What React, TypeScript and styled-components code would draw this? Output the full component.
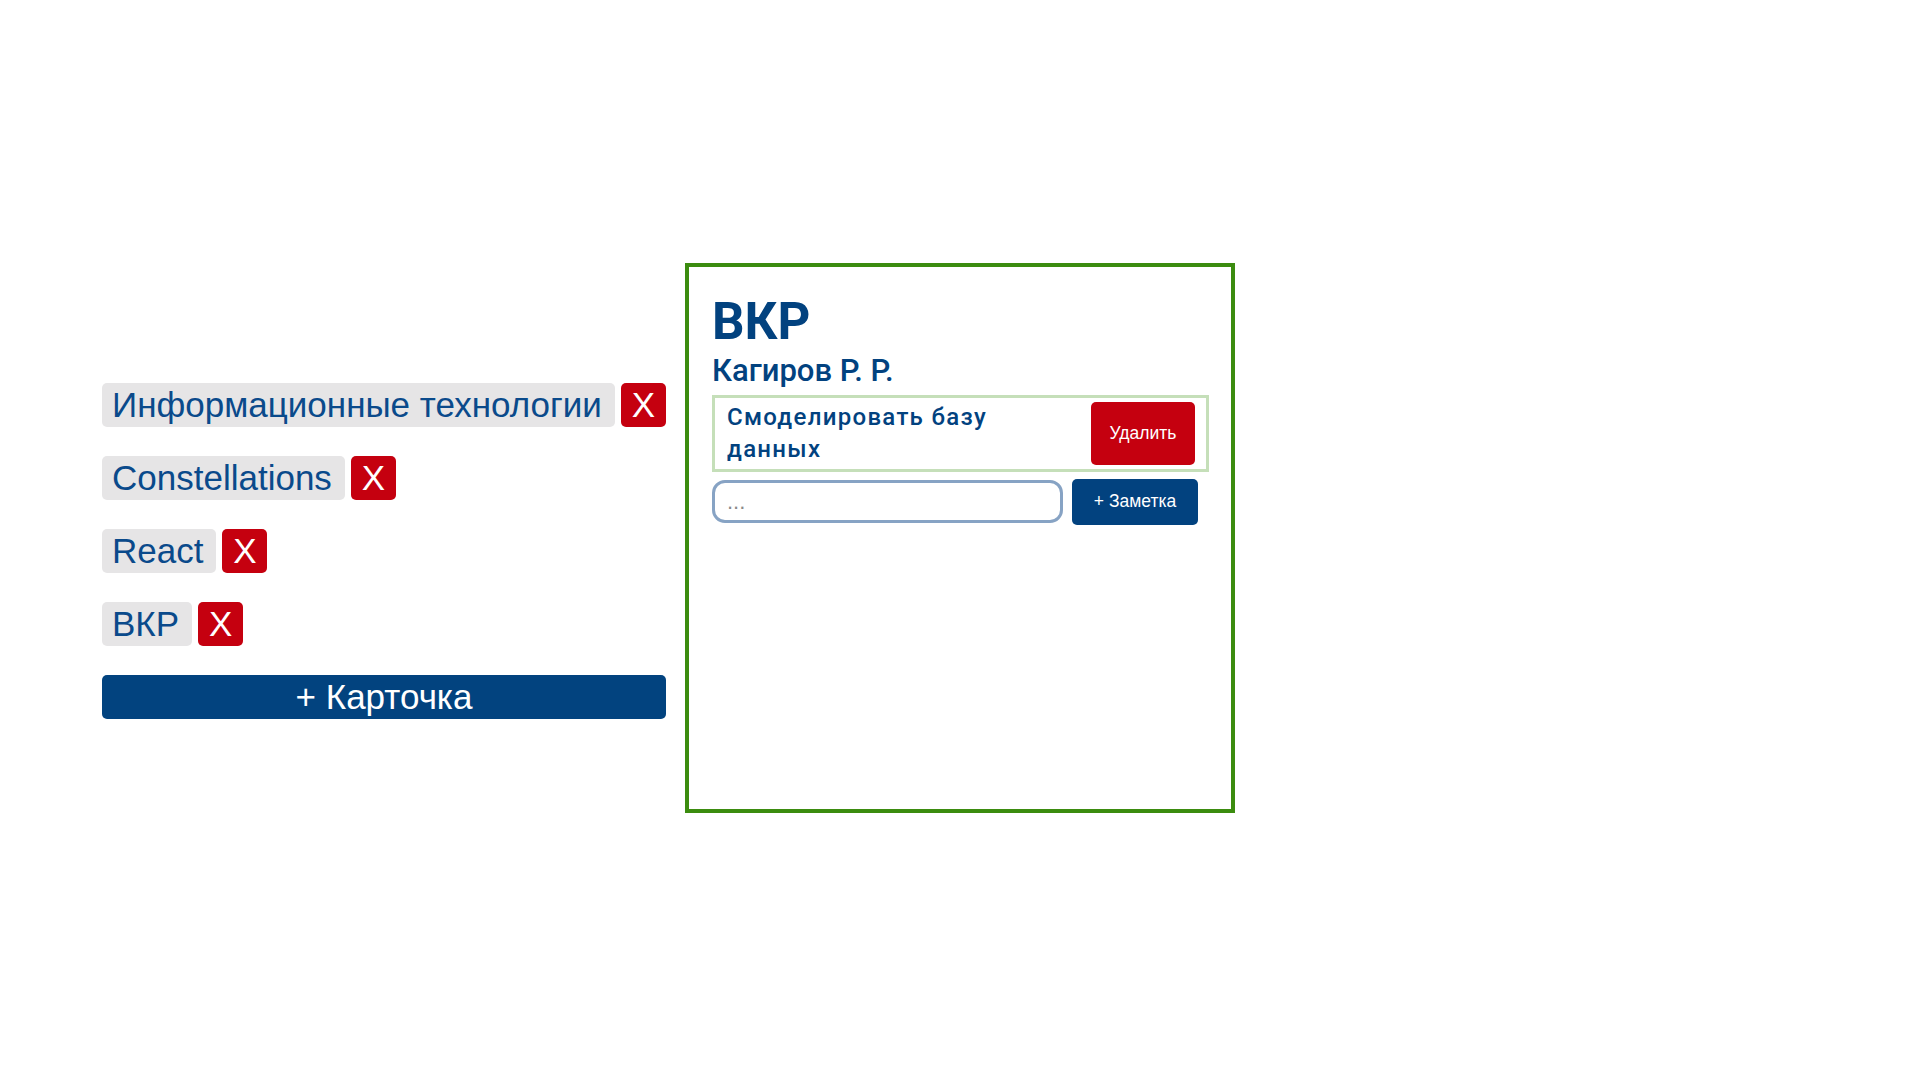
import React from "react";
import styled, { createGlobalStyle } from "styled-components";

const GlobalStyle = createGlobalStyle`
  html, body { margin: 0; padding: 0; background: #ffffff; }
  * { box-sizing: border-box; }
`;

const Page = styled.main`
  display: flex;
  align-items: center;
  min-height: 100vh;
  padding: 0 0 2px 102px;
  gap: 19px;
`;

const Column = styled.section`
  display: flex;
  flex-direction: column;
  align-items: stretch;
  gap: 29px;
  width: 564px;
  flex-shrink: 0;
  margin-top: 27px;
`;

const TagRow = styled.div`
  display: flex;
  gap: 6px;
`;

const Tag = styled.span`
  background: #e6e5e6;
  color: #0a4a8b;
  font-family: "Liberation Sans", Arial, sans-serif;
  font-size: 35px;
  line-height: 44px;
  height: 44px;
  padding: 0 13px 0 10px;
  border-radius: 5px;
  white-space: nowrap;
`;

const RemoveButton = styled.button`
  width: 45px;
  height: 44px;
  flex-shrink: 0;
  padding: 0;
  border: none;
  border-radius: 5px;
  background: #c5000f;
  color: #ffffff;
  font-family: "Liberation Sans", Arial, sans-serif;
  font-size: 35px;
  line-height: 44px;
  cursor: pointer;
`;

const AddCardButton = styled.button`
  width: 100%;
  height: 44px;
  padding: 0;
  border: none;
  border-radius: 5px;
  background: #02437f;
  color: #ffffff;
  font-family: "Liberation Sans", Arial, sans-serif;
  font-size: 35px;
  line-height: 44px;
  cursor: pointer;
`;

const Card = styled.article`
  width: 550px;
  height: 550px;
  flex-shrink: 0;
  border: 4px solid #3b8c0f;
  background: #ffffff;
  padding: 25px 22px 22px 23px;
  display: flex;
  flex-direction: column;
  align-items: flex-start;
`;

const Title = styled.h1`
  margin: 0;
  font-family: Roboto, "Noto Sans", sans-serif;
  font-weight: 700;
  font-size: 51px;
  line-height: normal;
  color: #02427f;
`;

const Author = styled.h2`
  margin: 1px 0 6px;
  font-family: Roboto, "Noto Sans", sans-serif;
  font-weight: 500;
  font-size: 31px;
  line-height: normal;
  color: #02427f;
`;

const Note = styled.div`
  width: 497px;
  min-height: 77px;
  border: 3px solid #c5dfb9;
  padding: 0 11px 0 12px;
  display: flex;
  align-items: center;
  justify-content: space-between;
`;

const NoteText = styled.p`
  margin: 0;
  max-width: 330px;
  font-family: Roboto, "Noto Sans", sans-serif;
  font-weight: 500;
  font-size: 24px;
  letter-spacing: 1.3px;
  line-height: 32px;
  color: #02427f;
`;

const DeleteButton = styled.button`
  width: 104px;
  height: 63px;
  flex-shrink: 0;
  border: none;
  border-radius: 5px;
  background: #c5000f;
  color: #ffffff;
  font-family: "Liberation Sans", Arial, sans-serif;
  font-size: 17.5px;
  cursor: pointer;
`;

const AddNoteRow = styled.div`
  display: flex;
  align-items: center;
  gap: 9px;
  margin-top: 7px;
`;

const NoteInput = styled.input`
  width: 351px;
  height: 43px;
  border: 3px solid #87a3c4;
  border-radius: 13px;
  padding: 0 12px;
  font-family: "Liberation Sans", Arial, sans-serif;
  font-size: 22px;
  color: #333;
  outline: none;
  &::placeholder {
    color: #8a8a8a;
  }
`;

const AddNoteButton = styled.button`
  width: 126px;
  height: 46px;
  border: none;
  border-radius: 5px;
  background: #02427f;
  color: #ffffff;
  font-family: "Liberation Sans", Arial, sans-serif;
  font-size: 17.5px;
  cursor: pointer;
`;

const cards = ["Информационные технологии", "Constellations", "React", "ВКР"];

export default function App() {
  return (
    <>
      <GlobalStyle />
      <Page>
        <Column>
          {cards.map((c) => (
            <TagRow key={c}>
              <Tag>{c}</Tag>
              <RemoveButton>X</RemoveButton>
            </TagRow>
          ))}
          <AddCardButton>+ Карточка</AddCardButton>
        </Column>
        <Card>
          <Title>ВКР</Title>
          <Author>Кагиров Р. Р.</Author>
          <Note>
            <NoteText>Смоделировать базу данных</NoteText>
            <DeleteButton>Удалить</DeleteButton>
          </Note>
          <AddNoteRow>
            <NoteInput placeholder="..." />
            <AddNoteButton>+ Заметка</AddNoteButton>
          </AddNoteRow>
        </Card>
      </Page>
    </>
  );
}
